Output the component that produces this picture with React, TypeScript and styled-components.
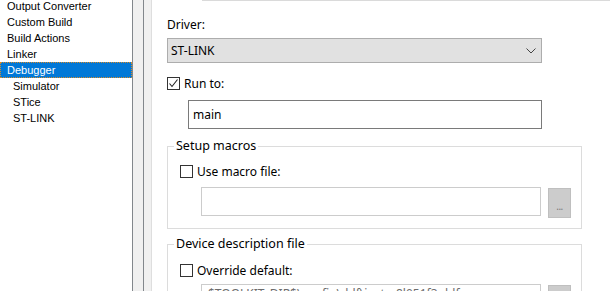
import styled, { createGlobalStyle } from 'styled-components';

const GlobalStyle = createGlobalStyle`
  html, body {
    margin: 0;
    width: 610px;
    height: 291px;
    overflow: hidden;
    background: #ffffff;
  }
`;

const Window = styled.div`
  display: flex;
  width: 610px;
  height: 291px;
  overflow: hidden;
  font-family: "Noto Sans", "Liberation Sans", sans-serif;
  font-size: 12px;
  color: #000;
`;

const Tree = styled.ul`
  list-style: none;
  margin: 0;
  padding: 0;
  width: 132px;
  flex: none;
  border-right: 1px solid #82878c;
  font-family: "Liberation Sans", Arial, sans-serif;
  font-size: 11px;
`;

const TreeList = styled.div`
  margin-top: -2px;
`;

const TreeItem = styled.li<{ $level: number; $selected?: boolean }>`
  height: 16px;
  line-height: 14px;
  box-sizing: border-box;
  padding-left: ${p => (p.$level === 0 ? 6 : 12)}px;
  border: 1px solid transparent;
  white-space: nowrap;
  ${p => p.$selected && `
    background: #0078d7;
    color: #ffffff;
    border: 1px dotted #d58a2a;
  `}
`;

const SplitFrame = styled.div`
  width: 10px;
  flex: none;
  background: #f0f0f0;
  border-right: 1px solid #82878c;
`;

const SplitEdge = styled.div`
  width: 7px;
  flex: none;
  background: #f0f0f0;
  border-right: 1px solid #dedede;
`;

const Pane = styled.div`
  flex: 1;
  min-width: 0;
  display: flex;
  flex-direction: column;
`;

const TabStrip = styled.div`
  display: flex;
  height: 2px;
  margin-left: 50px;
  background: #f0f0f0;
  border-bottom: 1px solid #dadada;
`;

const Tab = styled.div<{ $w: number }>`
  width: ${p => p.$w}px;
  flex: none;
  box-sizing: border-box;
  border-left: 1px solid #d4d4d4;
`;

const Form = styled.div`
  padding-left: 15px;
  display: flex;
  flex-direction: column;
`;

const Label = styled.div`
  margin-top: 16px;
  line-height: 16px;
`;

const Select = styled.div`
  margin-top: 5px;
  width: 375px;
  height: 25px;
  box-sizing: border-box;
  background: #e1e1e1;
  border: 1px solid #adadad;
  display: flex;
  align-items: center;
  justify-content: space-between;
  padding: 0 5px 0 3px;
`;

const CheckRow = styled.label<{ $top: number }>`
  display: flex;
  align-items: center;
  gap: 4px;
  margin-top: ${p => p.$top}px;
  height: 13px;
  line-height: 16px;
`;

const Box = styled.span`
  width: 13px;
  height: 13px;
  box-sizing: border-box;
  border: 1px solid #333333;
  background: #ffffff;
  display: flex;
  align-items: center;
  justify-content: center;
`;

const TextBox = styled.div<{ $top: number; $left: number; $width: number; $disabled?: boolean }>`
  margin-top: ${p => p.$top}px;
  margin-left: ${p => p.$left}px;
  width: ${p => p.$width}px;
  height: 29px;
  box-sizing: border-box;
  border: 1px solid ${p => (p.$disabled ? '#cccccc' : '#7a7a7a')};
  background: #ffffff;
  color: ${p => (p.$disabled ? '#6d6d6d' : '#000')};
  padding: 0 4px;
  display: flex;
  align-items: center;
  white-space: nowrap;
  overflow: hidden;
`;

const PathText = styled.span`
  align-self: flex-start;
  margin-top: 1px;
  padding-left: 2px;
  line-height: 16px;
`;

const Group = styled.fieldset<{ $top: number }>`
  margin: ${p => p.$top}px 0 0 0;
  padding: 0 0 10px 12px;
  width: 415px;
  box-sizing: border-box;
  border: 1px solid #dcdcdc;
`;

const Legend = styled.legend`
  margin-left: -6px;
  padding: 0 2px;
  font-size: 12.5px;
  line-height: 16px;
`;

const BrowseRow = styled.div<{ $top: number }>`
  display: flex;
  align-items: flex-start;
  gap: 7px;
  margin-top: ${p => p.$top}px;
`;

const BrowseButton = styled.div`
  margin-top: 1px;
  width: 23px;
  height: 30px;
  box-sizing: border-box;
  background: #cccccc;
  border: 1px solid #bfbfbf;
  color: #7a7a7a;
  font-size: 10px;
  line-height: 10px;
  padding-top: 5px;
  display: flex;
  align-items: center;
  justify-content: center;
  letter-spacing: -0.5px;
`;

const Check = () => (
  <svg width="11" height="11" viewBox="0 0 11 11">
    <polyline points="1.5,5.5 4,8.5 9.5,1.5" fill="none" stroke="#222" strokeWidth="1.1" />
  </svg>
);

const Chevron = () => (
  <svg width="10" height="6" viewBox="0 0 10 6">
    <polyline points="0.5,0.5 5,5 9.5,0.5" fill="none" stroke="#444" strokeWidth="1" />
  </svg>
);

const treeItems = [
  { label: 'Output Converter', level: 0 },
  { label: 'Custom Build', level: 0 },
  { label: 'Build Actions', level: 0 },
  { label: 'Linker', level: 0 },
  { label: 'Debugger', level: 0, selected: true },
  { label: 'Simulator', level: 1 },
  { label: 'STice', level: 1 },
  { label: 'ST-LINK', level: 1 },
];

export default function App() {
  return (
    <>
      <GlobalStyle />
      <Window>
        <Tree>
          <TreeList>
            {treeItems.map(item => (
              <TreeItem key={item.label} $level={item.level} $selected={item.selected}>
                {item.label}
              </TreeItem>
            ))}
          </TreeList>
        </Tree>
        <SplitFrame />
        <SplitEdge />
        <Pane>
          <TabStrip>
            <Tab $w={53} />
            <Tab $w={91} />
            <Tab $w={51} />
            <Tab $w={1} />
          </TabStrip>
          <Form>
            <Label>Driver:</Label>
            <Select>
              <span>ST-LINK</span>
              <Chevron />
            </Select>
            <CheckRow $top={14}>
              <Box><Check /></Box>
              Run to:
            </CheckRow>
            <TextBox $top={10} $left={21} $width={354}>main</TextBox>
            <Group $top={9}>
              <Legend>Setup macros</Legend>
              <CheckRow $top={11}>
                <Box />
                Use macro file:
              </CheckRow>
              <BrowseRow $top={9}>
                <TextBox $top={0} $left={21} $width={340} $disabled />
                <BrowseButton>...</BrowseButton>
              </BrowseRow>
            </Group>
            <Group $top={7}>
              <Legend>Device description file</Legend>
              <CheckRow $top={12}>
                <Box />
                Override default:
              </CheckRow>
              <BrowseRow $top={7}>
                <TextBox $top={0} $left={21} $width={340} $disabled>
                  <PathText>$TOOLKIT_DIR$\config\ddf\iostm8l051f3.ddf</PathText>
                </TextBox>
                <BrowseButton>...</BrowseButton>
              </BrowseRow>
            </Group>
          </Form>
        </Pane>
      </Window>
    </>
  );
}
